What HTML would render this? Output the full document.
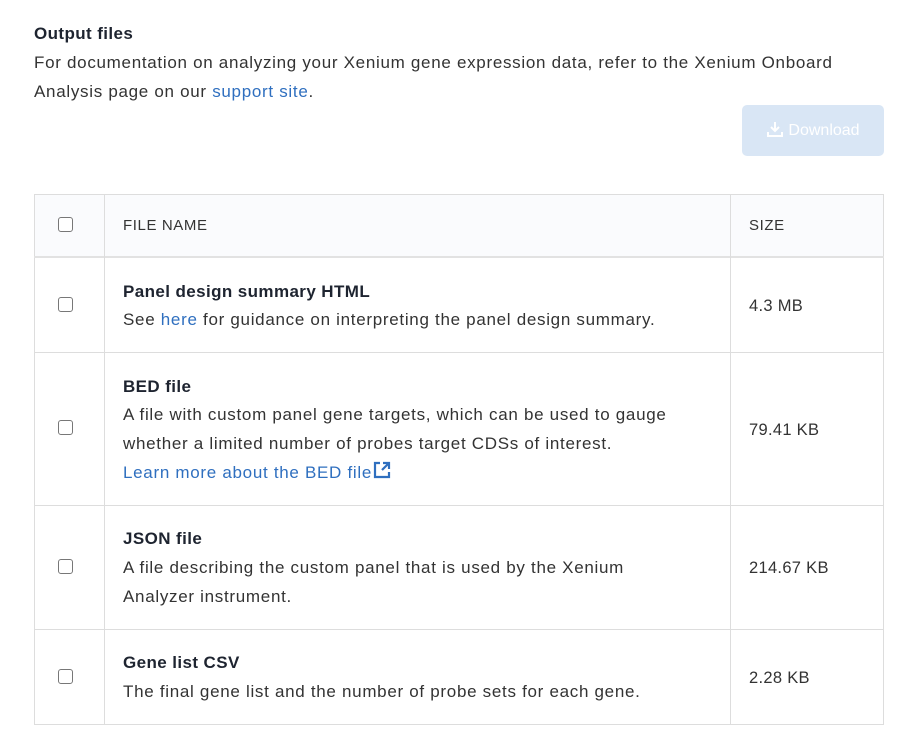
<!DOCTYPE html>
<html><head><style>
*{margin:0;padding:0;box-sizing:border-box}
body{width:910px;height:756px;background:#fff;font-family:"Liberation Sans",sans-serif;color:#2a2f3a;position:relative;overflow:hidden}
.abs{position:absolute}
a{color:#2f6fbf;text-decoration:none}
.cb{position:absolute;left:58px;width:15px;height:15px;border:1.5px solid #777;border-radius:3px;background:#fff}
.h{font-weight:bold;font-size:17px;letter-spacing:0.4px;color:#1e2430}
.d{font-size:17px;letter-spacing:0.7px;line-height:29px;color:#333}
.sz{position:absolute;left:749px;font-size:16.5px;letter-spacing:0.3px;color:#333}
.hl{position:absolute;left:34px;width:850px;height:1px;background:#ddd}
</style></head><body>
<div class="abs h" style="left:34px;top:24px;font-size:17px">Output files</div>
<div class="abs d" style="left:34px;top:48px;width:830px">For documentation on analyzing your Xenium gene expression data, refer to the Xenium Onboard Analysis page on our <a>support site</a>.</div>
<div class="abs" style="left:742px;top:105px;width:142px;height:51px;background:#d9e6f5;border-radius:5px;color:#fff;font-size:16px;line-height:51px;text-align:center">
<svg width="18" height="18" viewBox="0 0 18 18" style="vertical-align:-3px;margin-right:4px"><path d="M9 2v9M5 7l4 4 4-4M2 12v4h14v-4" stroke="#fff" stroke-width="2" fill="none"/></svg>Download</div>
<div class="abs" style="left:34px;top:194px;width:850px;height:531px;border:1px solid #ddd"></div>
<div class="abs" style="left:35px;top:195px;width:848px;height:61px;background:#fafbfd"></div>
<div class="hl" style="top:256px;height:2px;background:#e2e2e2"></div>
<div class="hl" style="top:352px"></div>
<div class="hl" style="top:505px"></div>
<div class="hl" style="top:629px"></div>
<div class="abs" style="left:104px;top:194px;width:1px;height:531px;background:#ddd"></div>
<div class="abs" style="left:730px;top:194px;width:1px;height:531px;background:#ddd"></div>
<div class="cb" style="top:217px"></div>
<div class="abs" style="left:123px;top:217px;font-size:15px;letter-spacing:0.6px;color:#333">FILE NAME</div>
<div class="abs" style="left:749px;top:217px;font-size:15px;letter-spacing:0.6px;color:#333">SIZE</div>

<div class="cb" style="top:297px"></div>
<div class="abs h" style="left:123px;top:282px">Panel design summary HTML</div>
<div class="abs d" style="left:123px;top:305px;white-space:nowrap">See <a>here</a> for guidance on interpreting the panel design summary.</div>
<div class="sz" style="top:297px">4.3 MB</div>

<div class="cb" style="top:420px"></div>
<div class="abs h" style="left:123px;top:377px">BED file</div>
<div class="abs d" style="left:123px;top:400px;width:575px">A file with custom panel gene targets, which can be used to gauge whether a limited number of probes target CDSs of interest.<br><a>Learn more about the BED file<svg width="22" height="18" viewBox="0 0 22 18" style="vertical-align:-1px"><path d="M8 2H3v14h14v-5M11 2h6v6M17 2l-7 7" stroke="#2f6fbf" stroke-width="2.2" fill="none"/></svg></a></div>
<div class="sz" style="top:421px">79.41 KB</div>

<div class="cb" style="top:559px"></div>
<div class="abs h" style="left:123px;top:529px">JSON file</div>
<div class="abs d" style="left:123px;top:553px;width:540px">A file describing the custom panel that is used by the Xenium Analyzer instrument.</div>
<div class="sz" style="top:559px">214.67 KB</div>

<div class="cb" style="top:669px"></div>
<div class="abs h" style="left:123px;top:653px">Gene list CSV</div>
<div class="abs d" style="left:123px;top:677px;white-space:nowrap">The final gene list and the number of probe sets for each gene.</div>
<div class="sz" style="top:669px">2.28 KB</div>
</body></html>
